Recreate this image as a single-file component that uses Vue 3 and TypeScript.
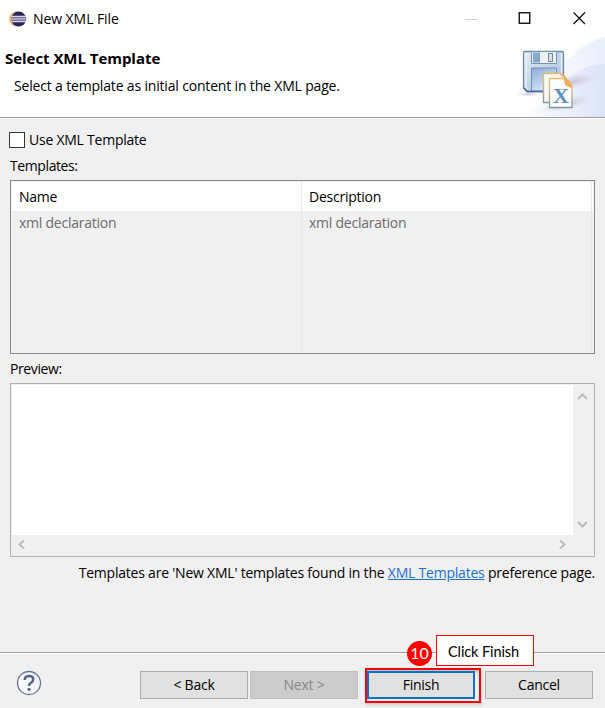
<script setup lang="ts">
import { ref } from 'vue'

interface TemplateRow {
  name: string
  description: string
}

const useTemplate = ref(false)
const rows: TemplateRow[] = [{ name: 'xml declaration', description: 'xml declaration' }]
</script>

<template>
  <div class="dialog">
    <header class="banner">
      <div class="titlebar">
        <svg class="logo" width="18" height="18" viewBox="0 0 18 18">
          <circle cx="8.2" cy="9" r="7.8" fill="#f39a36" />
          <circle cx="9.6" cy="9" r="8" fill="#fff" />
          <circle cx="9.6" cy="9" r="7.6" fill="#2c2255" />
          <path d="M2.200 6.400h14.800M2 9h15.400M2.200 11.600h14.800" stroke="#d9d7e4" stroke-width="1.400" />
          <path d="M2.400 7.700h14.400M2.400 10.300h14.400" stroke="#8d87b4" stroke-width="1" />
        </svg>
        <span class="t window-title">New XML File</span>
        <svg class="controls" width="130" height="20" viewBox="0 0 130 20">
          <path d="M0 10.500h12" stroke="#d0d0d0" />
          <rect x="54.250" y="3.750" width="10.500" height="10.500" fill="none" stroke="#111" stroke-width="1.400" />
          <path d="M108.500 3.500l11.500 11.500M120 3.500l-11.500 11.500" stroke="#111" stroke-width="1.300" />
        </svg>
      </div>
      <h1 class="t">Select XML Template</h1>
      <p class="t subtitle">Select a template as initial content in the XML page.</p>
      <svg class="art" width="95" height="81" viewBox="510 36 95 81">
        <defs>
          <linearGradient id="wash" x1="0" y1="0" x2="1" y2="0">
            <stop offset="0" stop-color="#f8f9fe" stop-opacity="0" />
            <stop offset=".55" stop-color="#f5f7fd" />
            <stop offset="1" stop-color="#e9eefb" />
          </linearGradient>
          <linearGradient id="wash2" x1="0" y1="0" x2="1" y2="0">
            <stop offset="0" stop-color="#edf1fc" stop-opacity="0" />
            <stop offset="1" stop-color="#dce4f7" />
          </linearGradient>
          <linearGradient id="disk" x1="0" y1="0" x2="1" y2="1">
            <stop offset="0" stop-color="#e2ecf4" />
            <stop offset=".5" stop-color="#c2d5e8" />
            <stop offset="1" stop-color="#98b8dd" />
          </linearGradient>
          <linearGradient id="label" x1="0" y1="0" x2=".5" y2="1">
            <stop offset="0" stop-color="#8baedb" />
            <stop offset="1" stop-color="#d8e6f5" />
          </linearGradient>
          <linearGradient id="page" x1="0" y1="0" x2="0" y2="1">
            <stop offset="0" stop-color="#f0b766" />
            <stop offset=".35" stop-color="#d6bd83" />
            <stop offset="1" stop-color="#789aa0" />
          </linearGradient>
          <radialGradient id="shade">
            <stop offset="0" stop-color="#bcb1ce" stop-opacity=".7" />
            <stop offset="1" stop-color="#cfc5dd" stop-opacity="0" />
          </radialGradient>
        </defs>
        <path d="M515 117C545 112 556 48 605 37V117Z" fill="url(#wash)" />
        <path d="M520 117C550 112 558 65 605 64V117Z" fill="url(#wash2)" />
        <ellipse cx="528" cy="94" rx="12" ry="3" fill="url(#shade)" />
        <ellipse cx="572" cy="82" rx="27" ry="7" fill="url(#shade)" transform="rotate(-13 572 82)" />
        <ellipse cx="566" cy="104" rx="26" ry="6" fill="url(#shade)" transform="rotate(-14 566 104)" />
        <path d="M525 51.500h37q1.500 0 1.500 1.500v38.500h-36.500l-3.500-3.500V53q0-1.500 1.500-1.500Z" fill="url(#disk)" stroke="#6f8ba5" stroke-width="1.300" />
        <path d="M526 53v34l2 2.500M561.500 53v26" fill="none" stroke="#edf4fb" stroke-width="1.200" />
        <path d="M531.500 51.500h25v12h-25z" fill="#eef1f3" stroke="#7592ad" />
        <path d="M533 52.500h6v10h-6z" fill="#87a7d4" />
        <path d="M539.500 52.500v10" stroke="#8a9eb1" />
        <rect x="548.500" y="53.500" width="4" height="8" fill="#d7e0e8" stroke="#708797" />
        <path d="M531.500 91v-23h25v23z" fill="url(#label)" stroke="#7091b6" />
        <path d="M524 88l3.500 3.500H546" fill="none" stroke="#45699b" stroke-width="1.500" />
        <path d="M543.500 73.500h17l7 8v21h-24z" fill="#f9f9f2" stroke="url(#page)" stroke-width="1.300" />
        <path d="M549.500 78.500h15l7.500 8v21h-22.500z" fill="#fcfdff" stroke="url(#page)" stroke-width="1.300" />
        <path d="M559.500 73.500q6 1 7 6M564 78.500q7 1 8 9l-6-2z" fill="#f2ae54" stroke="#eab069" />
        <text x="553" y="103" class="glyph">X</text>
      </svg>
    </header>

    <main class="content">
      <label class="check">
        <input v-model="useTemplate" type="checkbox" />
        <span class="t check-text">Use XML Template</span>
      </label>
      <div class="t caption templates-caption">Templates:</div>
      <div class="table">
        <div class="row head">
          <span class="cell"><span class="t">Name</span></span>
          <span class="cell"><span class="t">Description</span></span>
        </div>
        <div v-for="row in rows" :key="row.name" class="row">
          <span class="cell"><span class="t">{{ row.name }}</span></span>
          <span class="cell"><span class="t">{{ row.description }}</span></span>
        </div>
        <div class="row rest"><span class="cell"></span><span class="cell"></span></div>
      </div>
      <div class="t caption preview-caption">Preview:</div>
      <div class="preview">
        <div class="page"></div>
        <div class="bar vertical">
          <svg width="11" height="9" viewBox="0 0 11 9"><path d="M1 7l4.500-4.500L10 7" /></svg>
          <svg width="11" height="9" viewBox="0 0 11 9"><path d="M1 2l4.500 4.500L10 2" /></svg>
        </div>
        <div class="bar horizontal">
          <svg width="9" height="11" viewBox="0 0 9 11"><path d="M7 1.500l-4.500 4L7 9.500" /></svg>
          <svg width="9" height="11" viewBox="0 0 9 11"><path d="M2 1.500l4.500 4L2 9.500" /></svg>
        </div>
      </div>
      <p class="t note">Templates are 'New XML' templates found in the <a>XML Templates</a> preference page.</p>
    </main>

    <footer class="actions">
      <svg class="help" width="26" height="26" viewBox="0 0 26 26">
        <circle cx="13" cy="13" r="11.500" fill="#f7f8fa" stroke="#637591" stroke-width="1.300" />
        <path d="M8.800 10V8.600Q9.500 6 13 6q4.200 0 4.200 3.400 0 2-2.300 3.400-1.900 1.200-1.900 3.200" fill="none" stroke="#51658a" stroke-width="2.500" />
        <circle cx="13" cy="19.300" r="1.600" fill="#51658a" />
      </svg>
      <button class="back"><span class="t">&lt; Back</span></button>
      <button class="next" disabled><span class="t">Next &gt;</span></button>
      <div class="highlight">
        <button class="finish"><span class="t">Finish</span></button>
      </div>
      <button class="cancel"><span class="t">Cancel</span></button>
      <span class="badge">10</span>
      <span class="callout">Click Finish</span>
    </footer>
  </div>
</template>

<style>
body {
  margin: 0;
}
</style>

<style scoped>
* {
  box-sizing: border-box;
}
.dialog {
  width: 605px;
  height: 708px;
  display: flex;
  flex-direction: column;
  overflow: hidden;
  background: #f0f0f0;
  color: #000;
  font: 14px/20px "Open Sans", "Noto Sans", sans-serif;
}
.t {
  font-size: 14px;
  letter-spacing: -0.24px;
  white-space: pre;
}
.banner {
  position: relative;
  height: 119px;
  background: #fff;
  border-bottom: 1px solid #fff;
  box-shadow: inset 0 -1px #a0a0a0;
}
.titlebar {
  display: flex;
  align-items: center;
  height: 38px;
  padding-left: 9px;
}
.window-title {
  margin-left: 6px;
  letter-spacing: -0.07px;
}
.controls {
  margin-left: auto;
  margin-right: 10px;
}
h1 {
  margin: 10px 0 0 5px;
  font-weight: 700;
  line-height: 20px;
}
h1.t {
  font-size: 15px;
  letter-spacing: -0.04px;
}
.subtitle {
  margin: 8px 0 0 14px;
  letter-spacing: -0.17px;
}
.art {
  position: absolute;
  right: 0;
  top: 36px;
}
.glyph {
  font: 700 22px "Liberation Serif", serif;
  fill: #6290ba;
}
.content {
  height: 533px;
  padding: 12px 10px 0;
}
.check {
  display: flex;
  align-items: center;
  height: 18px;
}
.check input {
  appearance: none;
  width: 16px;
  height: 16px;
  margin: 0 4px 0 -1px;
  background: #fff;
  border: 1px solid #333;
}
.caption {
  height: 20px;
}
.templates-caption {
  margin-top: 7px;
  letter-spacing: -0.4px;
}
.table {
  display: flex;
  flex-direction: column;
  width: 585px;
  height: 174px;
  margin-top: 4px;
  padding: 1px;
  border: 1px solid #828790;
}
.row {
  display: flex;
  height: 24px;
  color: #6d6d6d;
}
.row.head {
  height: 29px;
  background: #fff;
  color: #000;
}
.row.rest {
  flex: 1;
}
.cell {
  display: flex;
  align-items: center;
  width: 290px;
  padding-left: 7px;
  border-right: 1px solid #e4e9f0;
}
.preview-caption {
  margin-top: 5px;
  letter-spacing: -0.4px;
}
.preview {
  display: grid;
  grid-template: 150px 19px / 561px 19px;
  width: 585px;
  height: 174px;
  margin-top: 4px;
  padding: 1px;
  border: 1px solid #adb0b6;
}
.page {
  background: #fff;
}
.bar {
  display: flex;
  justify-content: space-between;
}
.bar path {
  fill: none;
  stroke: #bdbdbd;
  stroke-width: 2;
}
.vertical {
  flex-direction: column;
  align-items: center;
  padding: 7px 0 6px;
}
.horizontal {
  align-items: center;
  padding: 0 6px 0 5px;
}
.note {
  margin: 6px 0 0;
  text-align: right;
  letter-spacing: -0.22px;
}
.note a {
  color: #1a6fd0;
  text-decoration: underline;
}
.actions {
  position: relative;
  flex: 1;
  display: flex;
  align-items: flex-start;
  border-top: 1px solid #a0a0a0;
  box-shadow: inset 0 1px #fff;
}
.help {
  margin: 17px 0 0 16px;
}
button {
  width: 108px;
  height: 28px;
  margin: 18px 0 0;
  padding: 0;
  background: #e1e1e1;
  border: 1px solid #adadad;
  color: #000;
  font: inherit;
}
.back {
  margin-left: 98px;
}
.next {
  margin-left: 2px;
  background: #ccc;
  border-color: #bfbfbf;
  color: #888;
}
.highlight {
  width: 116px;
  height: 35px;
  margin: 15px 0 0 7px;
  padding: 1px 0;
  border: 2px solid #f00;
  box-shadow: 1px 2px 3px #ccc, inset 1px 2px 3px #bbb;
}
.finish {
  display: block;
  margin: 0;
  border: 2px solid #0873cf;
}
.cancel {
  margin-left: 4px;
}
.badge {
  position: absolute;
  left: 407px;
  top: -12px;
  width: 25px;
  height: 25px;
  border-radius: 50%;
  background: #f00;
  color: #fff;
  font: 16px/23px Lato, sans-serif;
  text-align: center;
}
.callout {
  position: absolute;
  left: 436px;
  top: -18px;
  width: 98px;
  height: 31px;
  border: 1px solid #f00;
  background: #fff;
  font: 14.500px/32px Lato, sans-serif;
  letter-spacing: -0.1px;
  padding-left: 11px;
  white-space: nowrap;
}
</style>
